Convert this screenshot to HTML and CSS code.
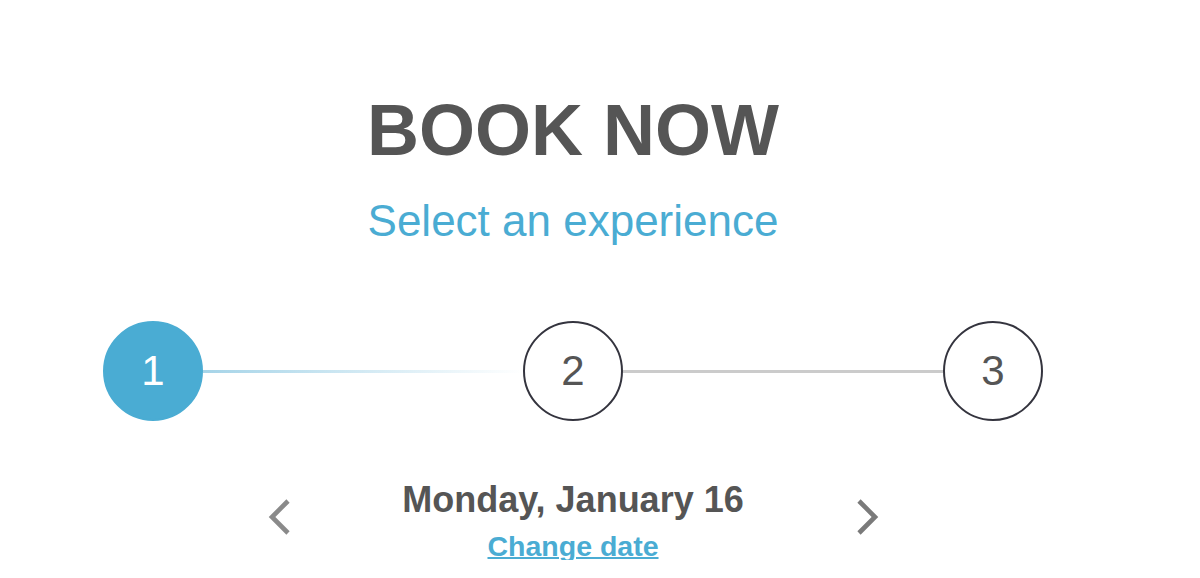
FILE: index.html
```html
<!DOCTYPE html>
<html lang="en">
<head>
<meta charset="utf-8">
<title>Book Now</title>
<link rel="stylesheet" href="styles.css">
</head>
<body>
<main class="page">
  <header class="intro">
    <h1 class="title">BOOK NOW</h1>
    <p class="subtitle">Select an experience</p>
  </header>
  <ol class="steps">
    <li class="step step-active">1</li>
    <li class="connector connector-done"></li>
    <li class="step">2</li>
    <li class="connector"></li>
    <li class="step">3</li>
  </ol>
  <div class="date-nav">
    <button class="arrow" aria-label="Previous day">
      <svg width="28" height="48" viewBox="0 0 28 48"><path d="M22 4 L6 20 L22 36" fill="none" stroke="#8a8a8a" stroke-width="4.6"/></svg>
    </button>
    <div class="date-block">
      <div class="date">Monday, January 16</div>
      <a class="change" href="#">Change date</a>
    </div>
    <button class="arrow" aria-label="Next day">
      <svg width="28" height="48" viewBox="0 0 28 48"><path d="M6 4 L22 20 L6 36" fill="none" stroke="#7a7a7a" stroke-width="4.6"/></svg>
    </button>
  </div>
</main>
</body>
</html>
```

FILE: styles.css
```css
* { box-sizing: border-box; }
html, body { margin: 0; padding: 0; background: #fff; }
body {
  font-family: "Liberation Sans", Arial, sans-serif;
  color: #555;
}
.page {
  width: 940px;
  margin-left: 103px;
  padding-top: 94px;
}
.intro { text-align: center; }
.title {
  margin: 0;
  font-size: 72px;
  line-height: 72px;
  font-weight: 700;
  color: #555;
}
.subtitle {
  margin: 33px 0 0;
  font-size: 44px;
  line-height: 44px;
  color: #4aacd3;
}
.steps {
  list-style: none;
  margin: 78px 0 0;
  padding: 0;
  display: flex;
  align-items: center;
}
.step {
  width: 100px;
  height: 100px;
  flex: none;
  border-radius: 50%;
  border: 2px solid #34343e;
  display: flex;
  align-items: center;
  justify-content: center;
  font-size: 42px;
  color: #555;
}
.step-active {
  background: #4aacd3;
  border-color: #4aacd3;
  color: #fff;
}
.connector {
  flex: 1;
  height: 3px;
  background: #cbcbcb;
}
.connector-done {
  background: linear-gradient(to right, #a6d4e8, #ffffff);
}
.date-nav {
  width: 615px;
  margin: 61px auto 0;
  display: flex;
  align-items: center;
  justify-content: space-between;
}
.arrow {
  border: 0;
  background: none;
  padding: 0;
  margin: 0;
  display: block;
  cursor: pointer;
}
.arrow svg { display: block; }
.date-block {
  text-align: center;
}
.date {
  font-size: 36px;
  line-height: 36px;
  font-weight: 700;
  color: #555;
}
.change {
  display: inline-block;
  margin-top: 14px;
  font-size: 28.5px;
  line-height: 28px;
  font-weight: 700;
  color: #4aacd3;
  text-decoration: underline;
  text-decoration-thickness: 2px;
}
```
